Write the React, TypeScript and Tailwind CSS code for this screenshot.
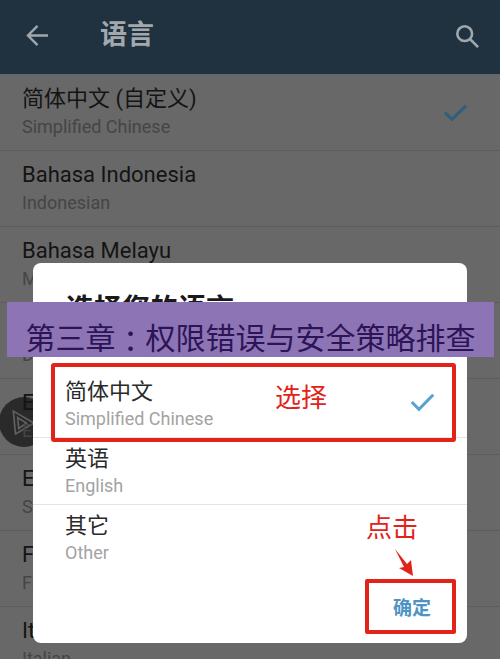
import React from "react";

const font = { fontFamily: '"Roboto","Noto Sans CJK SC",sans-serif' };

const rows = [
  { t: "简体中文 (自定义)", s: "Simplified Chinese", check: true },
  { t: "Bahasa Indonesia", s: "Indonesian" },
  { t: "Bahasa Melayu", s: "Malay" },
  { t: "Dansk", s: "Danish" },
  { t: "English", s: "English" },
  { t: "Español", s: "Spanish" },
  { t: "Français", s: "French" },
  { t: "Italiano", s: "Italian" },
];

function Check({ color, className }: { color: string; className: string }) {
  return (
    <svg viewBox="0 0 28 22" className={className} fill="none" stroke={color} strokeWidth="3.4" preserveAspectRatio="none">
      <path d="M2 11 L10 19 L26 3" />
    </svg>
  );
}

function Option({ t, s, border }: { t: string; s: string; border?: boolean }) {
  return (
    <div className={`h-[67px] pl-[32px] flex flex-col ${border ? "border-b border-[#e4e4e4]" : ""}`}>
      <div className="text-[22px] leading-[28px] mt-[7px] text-[#2a2a2a]">{t}</div>
      <div className="text-[18px] leading-[24px] mt-[1px] text-[#a3a3a3]">{s}</div>
    </div>
  );
}

export default function App() {
  return (
    <div className="relative w-[500px] h-[659px] overflow-hidden bg-[#686868]" style={font}>
      <header className="h-[75px] bg-[#20323f] border-b border-[#5a6770] flex items-center pl-[26px] pr-[21px] pb-[3px]">
        <svg viewBox="0 0 24 24" className="w-[23px] h-[23px]" fill="none" stroke="#a0a8ae" strokeWidth="2.4">
          <path d="M23 12H2M12 2 2 12l10 10" />
        </svg>
        <div className="ml-[51px] text-[27px] font-bold text-[#a2a9ae]">语言</div>
        <svg viewBox="0 0 26 26" className="ml-auto w-[24px] h-[24px]" fill="none" stroke="#a0a8ae" strokeWidth="2.8">
          <circle cx="10.5" cy="10.5" r="8" />
          <path d="M16.5 16.5 25 25" />
        </svg>
      </header>

      <div className="absolute left-[-1px] top-[397px] w-[50px] h-[50px] rounded-full bg-[#2a2a2a] flex items-center justify-center">
        <svg viewBox="0 0 24 24" className="w-[26px] h-[26px] ml-[-4px]" fill="none" stroke="#626262" strokeWidth="1.5">
          <path d="M4 2 23 13 6 23ZM8 8 16 13 9 18Z" />
        </svg>
      </div>

      {rows.map((r) => (
        <div key={r.t} className="relative h-[76px] px-[22px] border-b border-[#5c5c5c] flex items-center justify-between">
          <div className="flex flex-col">
            <div className="text-[22px] leading-[28px] mt-[-1px] text-[#141414]">{r.t}</div>
            <div className="text-[18px] leading-[24px] mt-[2px] text-[#454545]">{r.s}</div>
          </div>
          {r.check && <Check color="#2f5f7c" className="w-[25px] h-[19px] mr-[10px] mt-[-1px]" />}
        </div>
      ))}

      <div className="absolute left-[33px] top-[263px] w-[434px] h-[380px] bg-white rounded-[8px] flex flex-col">
        <div className="h-[108px] pl-[33px] pt-[27px] text-[28px] leading-[40px] font-bold text-[#1a1a1a]">选择您的语言</div>
        <Option t="简体中文" s="Simplified Chinese" border />
        <Option t="英语" s="English" border />
        <Option t="其它" s="Other" />
        <div className="text-[19px] leading-[26px] font-bold text-[#4d94c4] self-end mr-[36px] mt-[24px]">确定</div>
      </div>

      <div className="absolute left-[410px] top-[392px] flex">
        <Check color="#58a2d2" className="w-[25px] h-[20px]" />
      </div>

      <div className="absolute left-[7px] top-[302px] w-[487px] h-[55px] bg-[#8d75b5] flex items-center justify-center text-[30px] text-[#2c1457] whitespace-nowrap pt-[19px] leading-[36px]">
        第三章<span style={{ fontFamily: '"Noto Sans CJK TC",sans-serif' }}>：</span>权限错误与安全策略排查
      </div>

      <div className="absolute left-[51px] top-[363px] w-[405px] h-[79px] border-[4px] border-[#e2231a] rounded-[3px]" />
      <div className="absolute left-[275px] top-[381px] text-[26px] leading-[34px] text-[#e2231a]">选择</div>
      <div className="absolute left-[366px] top-[511px] text-[26px] leading-[34px] text-[#e2231a]">点击</div>
      <svg viewBox="0 0 24 30" className="absolute left-[393px] top-[548px] w-[24px] h-[30px]">
        <path d="M2 1 L14 16 L18 12 L20 28 L6 20 L11 19 Z" fill="#e2231a" />
      </svg>
      <div className="absolute left-[365px] top-[579px] w-[91px] h-[55px] border-[4px] border-[#e2231a] rounded-[2px]" />
    </div>
  );
}
